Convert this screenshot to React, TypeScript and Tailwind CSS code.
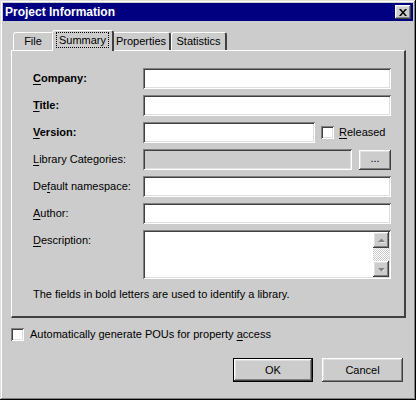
import type { ReactNode } from "react"

const raised =
  "shadow-[inset_-1px_-1px_#404040,inset_1px_1px_#ffffff,inset_-2px_-2px_#808080,inset_2px_2px_#dfdfdf]"
const sunken =
  "shadow-[inset_1px_1px_#808080,inset_-1px_-1px_#ffffff,inset_2px_2px_#404040,inset_-2px_-2px_#dfdfdf]"

function U({ children }: { children: ReactNode }) {
  return <span className="underline underline-offset-[2px]">{children}</span>
}

function Field({ disabled, className = "" }: { disabled?: boolean; className?: string }) {
  return (
    <div
      className={`h-[21px] ${sunken} ${disabled ? "bg-[#cccccc]" : "bg-white"} ${className}`}
    />
  )
}

function Check() {
  return <div className={`w-[13px] h-[13px] bg-white ${sunken} shrink-0`} />
}

function Tab({ label, active, w }: { label: string; active?: boolean; w: string }) {
  if (active) {
    return (
      <div
        className={`relative z-10 ${w} h-[21px] -mx-[2px] -mb-[1px] bg-[#cccccc] rounded-t-[3px] border-l border-t border-white border-r-2 border-r-[#404040] flex items-start justify-center pt-[1px]`}
      >
        <span className="px-[2px] h-[16px] leading-[15px] border border-dotted border-black">
          {label}
        </span>
      </div>
    )
  }
  return (
    <div
      className={`${w} h-[18px] rounded-t-[3px] border-l border-t border-white border-r-2 border-r-[#404040] flex items-center justify-center`}
    >
      {label}
    </div>
  )
}

function Row({ label, children }: { label: ReactNode; children: ReactNode }) {
  return (
    <div className="flex items-center h-[21px]">
      <div className="w-[110px] shrink-0">{label}</div>
      <div className="flex-1 flex items-center">{children}</div>
    </div>
  )
}

function Arrow({ up }: { up?: boolean }) {
  return (
    <div className={`w-[16px] h-[16px] bg-[#cccccc] ${raised} flex items-center justify-center`}>
      <svg width="7" height="5" viewBox="0 0 7 5">
        {up ? (
          <>
            <path d="M1 4 L4 1 L7 4 Z" fill="#ffffff" transform="translate(0.5 0.5)" />
            <path d="M0 4 L3.5 0.5 L7 4 Z" fill="#808080" />
          </>
        ) : (
          <>
            <path d="M1 1 L4 4 L7 1 Z" fill="#ffffff" transform="translate(0.5 0.5)" />
            <path d="M0 1 L3.5 4.5 L7 1 Z" fill="#808080" />
          </>
        )}
      </svg>
    </div>
  )
}

export default function App() {
  return (
    <div className="w-[416px] h-[400px] bg-[#cccccc] p-[3px] flex flex-col text-[11px] text-black font-['Liberation_Sans',Arial,sans-serif] shadow-[inset_-1px_-1px_#000000,inset_1px_1px_#dfdfdf,inset_-2px_-2px_#808080,inset_2px_2px_#ffffff]">
      {/* title bar */}
      <div className="h-[18px] bg-[#000080] flex items-center pl-[2px] pr-[2px]">
        <span className="text-white font-bold text-[12px] flex-1">Project Information</span>
        <div className={`w-[16px] h-[14px] bg-[#cccccc] ${raised} flex items-center justify-center`}>
          <svg width="8" height="7" viewBox="0 0 8 7">
            <path d="M0 0h2l2 2.5L6 0h2L5 3.5 8 7H6L4 4.5 2 7H0l3-3.5z" fill="#000000" />
          </svg>
        </div>
      </div>

      {/* tabs */}
      <div className="pl-[10px] pt-[9px] flex items-end h-[29px]">
        <Tab label="File" w="w-[41px]" />
        <Tab label="Summary" active w="w-[62px]" />
        <Tab label="Properties" w="w-[59px]" />
        <Tab label="Statistics" w="w-[56px]" />
      </div>

      {/* panel */}
      <div className="ml-[8px] w-[395px] h-[268px] border-l border-t border-white border-r-2 border-b-2 border-r-[#404040] border-b-[#404040] pt-[17px] pl-[21px] pr-[13px] flex flex-col gap-[6px]">
        <Row label={<span className="font-bold"><U>C</U>ompany:</span>}>
          <Field className="flex-1" />
        </Row>
        <Row label={<span className="font-bold"><U>T</U>itle:</span>}>
          <Field className="flex-1" />
        </Row>
        <Row label={<span className="font-bold"><U>V</U>ersion:</span>}>
          <Field className="w-[172px]" />
          <div className="ml-[6px] flex items-center gap-[5px]">
            <Check />
            <span><U>R</U>eleased</span>
          </div>
        </Row>
        <Row label={<span><U>L</U>ibrary Categories:</span>}>
          <Field disabled className="w-[209px]" />
          <div className={`ml-[7px] w-[32px] h-[20px] bg-[#cccccc] ${raised} flex items-center justify-center leading-none pb-[2px]`}>
            ...
          </div>
        </Row>
        <Row label={<span>De<U>f</U>ault namespace:</span>}>
          <Field className="flex-1" />
        </Row>
        <Row label={<span><U>A</U>uthor:</span>}>
          <Field className="flex-1" />
        </Row>
        <div className="flex items-start h-[49px]">
          <div className="w-[110px] shrink-0 pt-[2px]"><U>D</U>escription:</div>
          <div className={`flex-1 h-[49px] bg-white ${sunken} p-[2px] flex justify-end`}>
            <div className="w-[16px] flex flex-col">
              <Arrow up />
              <div className="flex-1 bg-[repeating-conic-gradient(#cccccc_0_25%,#ffffff_0_50%)] bg-[length:2px_2px]" />
              <Arrow />
            </div>
          </div>
        </div>
        <div className="pt-[1px]">The fields in bold letters are used to identify a library.</div>
      </div>

      {/* bottom */}
      <div className="ml-[8px] mt-[10px] flex items-center gap-[6px] h-[13px]">
        <Check />
        <span>Automatically generate POUs for property <U>a</U>ccess</span>
      </div>
      <div className="flex justify-end gap-[9px] pr-[10px] mt-[17px]">
        <div className="w-[80px] h-[24px] border border-black">
          <div className={`w-full h-full bg-[#cccccc] ${raised} flex items-center justify-center`}>OK</div>
        </div>
        <div className={`w-[81px] h-[24px] bg-[#cccccc] ${raised} flex items-center justify-center`}>Cancel</div>
      </div>
    </div>
  )
}
